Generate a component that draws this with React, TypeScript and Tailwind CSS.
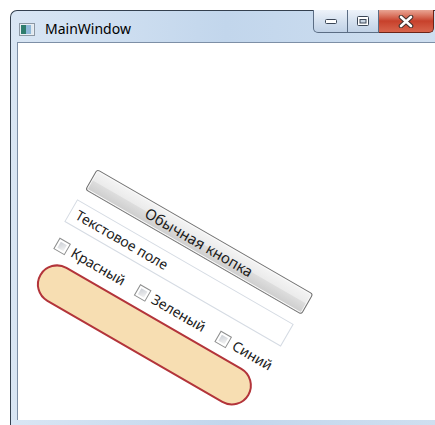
import React from "react";

const uiFont = "font-['Noto_Sans','Open_Sans','DejaVu_Sans',sans-serif]";

function AppIcon() {
  return (
    <svg width="16" height="13" viewBox="0 0 16 13" aria-hidden>
      <rect x="0.5" y="0.5" width="15" height="12" fill="#e9eef3" stroke="#8c98a4" />
      <rect x="2" y="2" width="5" height="9" fill="#2f7d6d" />
      <rect x="7" y="2" width="5" height="9" fill="#8fb8d8" />
      <rect x="12" y="2" width="2" height="9" fill="#dfe8ef" />
    </svg>
  );
}

function CaptionButtons() {
  return (
    <div className="flex h-[23px] -mt-px">
      <div className="w-[35px] h-full rounded-bl-[5px] border border-t-0 border-[#5b6d84] bg-gradient-to-b from-[#eef3fa] via-[#d5e1ef] to-[#c0d1e6] flex items-center justify-center">
        <svg width="12" height="6" viewBox="0 0 12 6" aria-hidden>
          <rect x="0.5" y="1.5" width="11" height="4" rx="1" fill="#ffffff" stroke="#3b4656" />
        </svg>
      </div>
      <div className="w-[31px] h-full border-b border-r border-[#5b6d84] bg-gradient-to-b from-[#eef3fa] via-[#d5e1ef] to-[#c0d1e6] flex items-center justify-center">
        <svg width="12" height="10" viewBox="0 0 12 10" aria-hidden>
          <rect x="0.5" y="0.5" width="11" height="9" rx="1" fill="#ffffff" stroke="#3b4656" />
          <rect x="3" y="3.5" width="6" height="3.5" fill="#c9d5e3" stroke="#3b4656" />
        </svg>
      </div>
      <div className="w-[55px] h-full rounded-br-[5px] border-b border-r border-[#6b2418] bg-gradient-to-b from-[#e9a594] via-[#c7402b] to-[#d8644c] flex items-center justify-center">
        <svg width="16" height="13" viewBox="0 0 16 13" aria-hidden>
          <path d="M3 2 L13 11 M13 2 L3 11" stroke="#40302c" strokeWidth="4.6" strokeLinecap="round" />
          <path d="M3 2 L13 11 M13 2 L3 11" stroke="#ffffff" strokeWidth="2.6" strokeLinecap="round" />
        </svg>
      </div>
    </div>
  );
}

function CheckItem({ label }: { label: string }) {
  return (
    <label className="w-[93px] flex items-center gap-[5px] shrink-0">
      <span className="w-[13px] h-[13px] border border-[#8e8f8f] bg-white p-[2px] shrink-0">
        <span className="block w-full h-full bg-gradient-to-br from-[#cbcfd5] to-[#f4f4f4]" />
      </span>
      <span className="text-[#1b1b1b]">{label}</span>
    </label>
  );
}

export default function App() {
  return (
    <div className={`w-[435px] h-[425px] bg-white overflow-hidden ${uiFont}`}>
      <div className="ml-[10px] mt-[10px] w-[431px] h-[430px] rounded-tl-[7px] border-l border-t border-[#34404f] bg-gradient-to-r from-[#d9e6f4] via-[#c2d6ec] to-[#cfdff0] flex flex-col">
        {/* title bar */}
        <div className="h-[31px] flex items-start">
          <div className="flex items-center pl-[8px] pt-[10px] gap-[10px]">
            <AppIcon />
            <span className="text-[14px] leading-[16px] text-black">MainWindow</span>
          </div>
          <div className="ml-auto mr-[7px]">
            <CaptionButtons />
          </div>
        </div>

        {/* client area */}
        <div className="ml-[6px] h-[378px] w-[420px] bg-white border-l border-t border-[#7d8fa6]">
          <div className="pl-[79px] pt-[126px]">
            <div className="w-[256px] origin-top-left rotate-[30deg] flex flex-col text-[14px] leading-[18px]">
              <div className="w-[250px] h-[24px] rounded-[3px] border border-[#707070] bg-[linear-gradient(#f4f4f4,#ebebeb_48%,#dddddd_52%,#cdcdcd)] flex items-center justify-center text-[15px] text-[#1b1b1b] shadow-[inset_0_0_0_1px_#fbfbfb]">
                Обычная кнопка
              </div>
              <div className="mt-[12px] -ml-[2px] w-[250px] h-[26px] border border-[#d5dbe3] bg-white flex items-center pl-[6px] text-[#1b1b1b]">
                Текстовое поле
              </div>
              <div className="mt-[12px] h-[20px] pl-[2px] flex items-center">
                <CheckItem label="Красный" />
                <CheckItem label="Зеленый" />
                <CheckItem label="Синий" />
              </div>
              <div className="mt-[6px] ml-[3px] w-[242px] h-[40px] rounded-full border-2 border-[#b3343a] bg-[#f7deb2]" />
            </div>
          </div>
        </div>
      </div>
    </div>
  );
}
